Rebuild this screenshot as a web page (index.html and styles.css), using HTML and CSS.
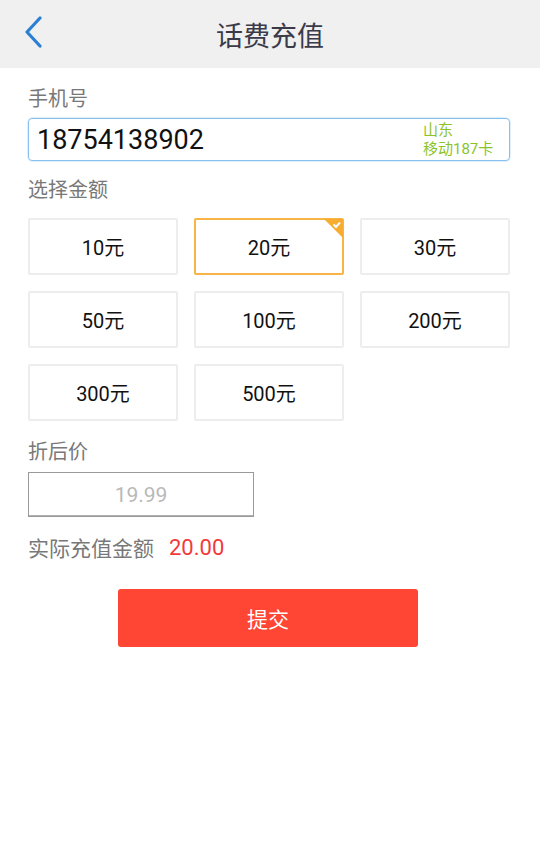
FILE: index.html
```html
<!DOCTYPE html>
<html>
<head>
    <meta charset="UTF-8">
    <title>话费充值</title>
    <link rel="stylesheet" href="styles.css">
</head>
<body>
    <header class="topbar">
        <a class="back" href="#">
            <svg width="20" height="32" viewBox="0 0 20 32">
                <path d="M16 2 L3 16 L16 30" fill="none" stroke="#2b80d5" stroke-width="3.2" stroke-linecap="round" stroke-linejoin="round"/>
            </svg>
        </a>
        <h1>话费充值</h1>
    </header>

    <main class="content">
        <div class="label">手机号</div>
        <div class="phone-box">
            <span class="phone">18754138902</span>
            <span class="carrier">山东<br>移动187卡</span>
        </div>

        <div class="label">选择金额</div>
        <div class="amounts">
            <div class="amount">10元</div>
            <div class="amount selected">20元
                <svg class="tick" width="19" height="19" viewBox="0 0 19 19">
                    <path d="M0 0 H19 V19 Z" fill="#f8ac30"/>
                    <path d="M9.5 5.5 L12 8 L16 3.5" fill="none" stroke="#fff" stroke-width="2"/>
                </svg>
            </div>
            <div class="amount">30元</div>
            <div class="amount">50元</div>
            <div class="amount">100元</div>
            <div class="amount">200元</div>
            <div class="amount">300元</div>
            <div class="amount">500元</div>
        </div>

        <div class="label">折后价</div>
        <div class="price-box">19.99</div>

        <div class="actual">
            <span>实际充值金额</span>
            <span class="actual-value">20.00</span>
        </div>

        <div class="submit-row">
            <button class="submit">提交</button>
        </div>
    </main>
</body>
</html>
```

FILE: styles.css
```css
:root {
    --blue-color: #2b80d5;
    --label-color: #787878;
    --green-color: #8cc32a;
    --orange-color: #f8b445;
    --red-color: #ff4533;
}

body {
    margin: 0;
    font-family: Roboto, "Noto Sans CJK SC", sans-serif;
    background-color: #fff;
    color: #111;
}

.topbar {
    height: 68px;
    background-color: #f0f0f0;
    display: flex;
    align-items: center;
    justify-content: center;
    position: relative;
}

.back {
    position: absolute;
    left: 24px;
    top: 16px;
}

.topbar h1 {
    margin: 0;
    font-size: 27px;
    font-weight: normal;
    color: #3a3a48;
}

.content {
    padding: 17px 30px 0 28px;
}

.label {
    font-size: 20px;
    color: var(--label-color);
    line-height: 28px;
}

.phone-box {
    margin-top: 5px;
    margin-bottom: 15px;
    height: 41px;
    border: 1px solid #88c0f0;
    box-shadow: 0 0 0 0.5px #c4e0f8;
    border-radius: 4px;
    display: flex;
    align-items: center;
    justify-content: space-between;
    padding: 0 0 0 8px;
}

.phone {
    font-size: 27px;
    color: #111;
}

.carrier {
    width: 86px;
    font-size: 15px;
    line-height: 19px;
    color: var(--green-color);
    padding-top: 1px;
}

.amounts {
    margin-top: 14px;
    display: grid;
    grid-template-columns: repeat(3, 150px);
    column-gap: 16px;
    row-gap: 16px;
}

.amount {
    height: 53px;
    border: 2px solid #ededed;
    border-radius: 2px;
    display: flex;
    align-items: center;
    justify-content: center;
    font-size: 20px;
    position: relative;
}

.amount.selected {
    border-color: var(--orange-color);
}

.tick {
    position: absolute;
    top: -1px;
    right: -1px;
}

.amounts + .label {
    margin-top: 17px;
}

.price-box {
    margin-top: 6px;
    width: 224px;
    height: 43px;
    border: 1px solid #9a9a9a;
    box-shadow: inset 0 -1px 0 #b0b0b0;
    display: flex;
    align-items: center;
    justify-content: center;
    font-size: 21px;
    color: #b9b9b9;
}

.actual {
    margin-top: 15px;
    font-size: 21px;
    color: var(--label-color);
    display: flex;
    gap: 15px;
    align-items: center;
}

.actual-value {
    color: #f23a3a;
    font-size: 22px;
}

.submit-row {
    margin-top: 27px;
    display: flex;
    justify-content: center;
    padding-right: 2px;
}

.submit {
    width: 300px;
    height: 58px;
    border: none;
    border-radius: 3px;
    background-color: var(--red-color);
    color: #fff;
    font-family: "Noto Sans CJK SC", sans-serif;
    font-size: 21px;
}
```
